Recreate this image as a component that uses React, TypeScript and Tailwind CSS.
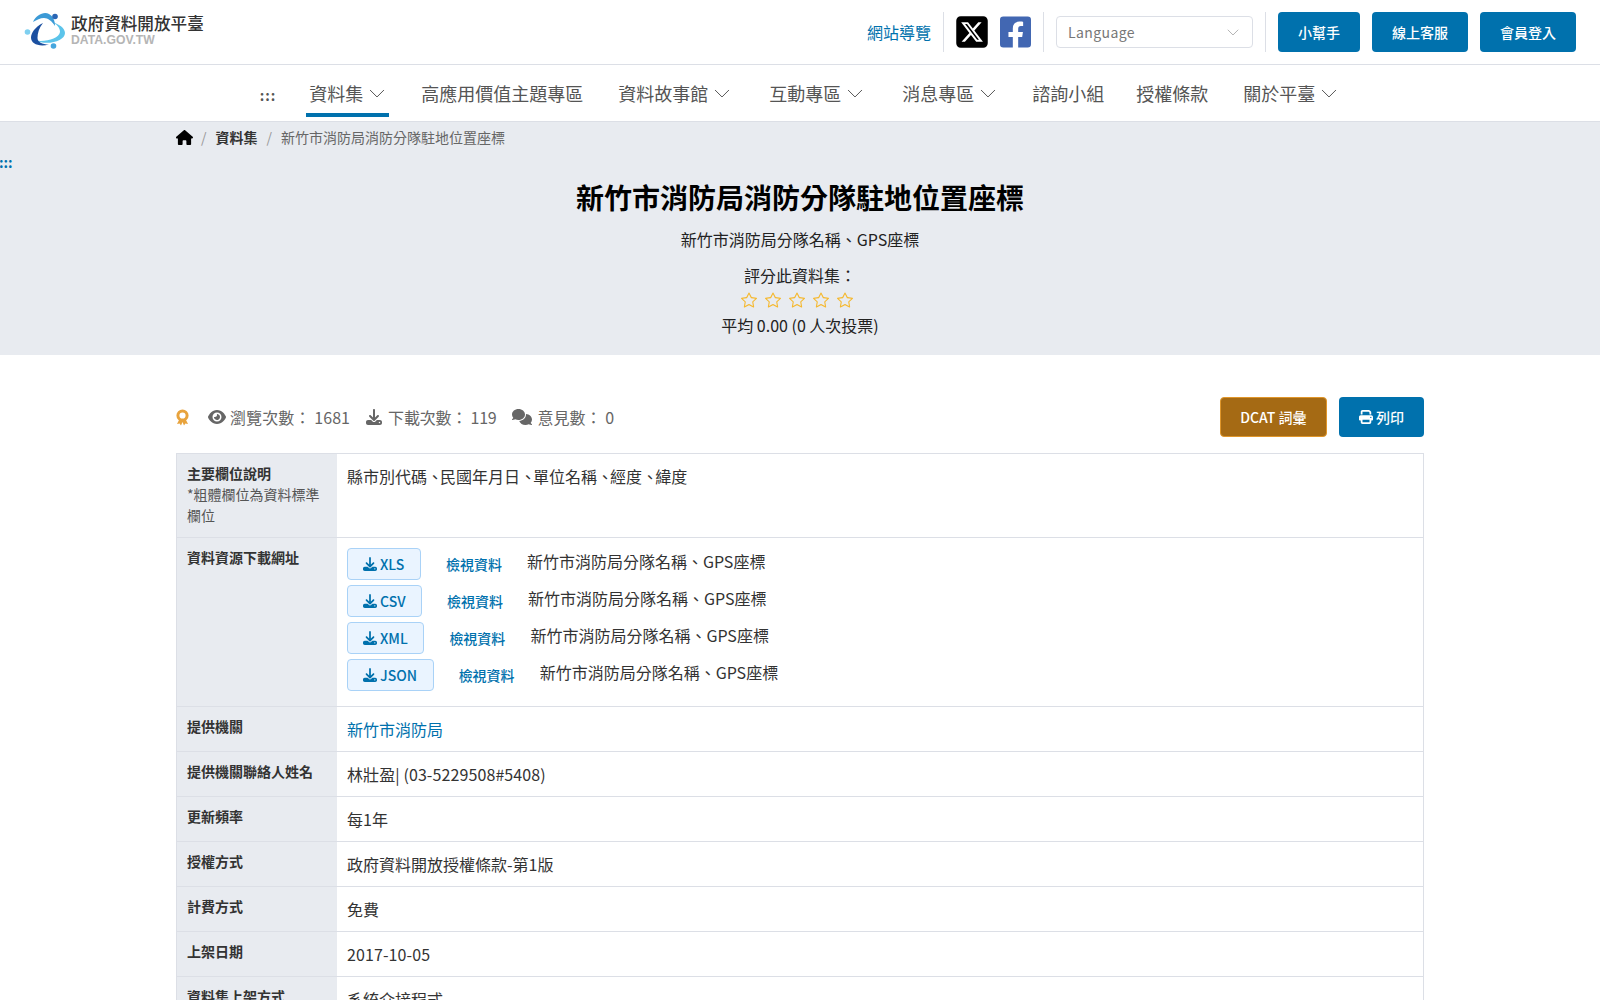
import React from "react";
import { FaFacebookSquare } from "react-icons/fa";
import { FaHouse, FaEye, FaDownload, FaComments, FaPrint, FaSquareXTwitter } from "react-icons/fa6";
import { BsStar } from "react-icons/bs";

function Logo() {
  return (
    <svg width="42" height="40" viewBox="0 0 42 40" className="shrink-0">
      <path d="M11 28.5 C22 30 35 27 36 20 C36 16 33 12 27 9.5 C35 12 41 16 41 21 C41 29 24 34 11 28.5Z" fill="#5cc4ea" />
      <path d="M9 10 C12 3 20 -1 25 2 C29 4 31 9 31 14 C28 9 24 6 20 6 C16 6 13 8 9 10Z" fill="#3c9ad6" />
      <path d="M19 11 C11 15 7 21 7 25.5 C7 32 15 35 25 32.5 C18 32.5 13.5 30 13.5 26 C13.5 21 15 16 19 11Z" fill="#1b4fa0" />
      <circle cx="31" cy="4.5" r="2.8" fill="#2a66b5" />
      <circle cx="3.5" cy="20" r="2.8" fill="#7fd0f0" />
      <circle cx="29.5" cy="34" r="2.8" fill="#45a6de" />
    </svg>
  );
}

function Award() {
  return (
    <svg width="13" height="17" viewBox="0 0 13 17">
      <path d="M3 11 L1 15 L3.6 14.6 L5 16.5 L6.5 13 L8 16.5 L9.4 14.6 L12 15 L10 11Z" fill="#e8a33d" />
      <circle cx="6.5" cy="6.5" r="4.6" fill="none" stroke="#e8a33d" strokeWidth="3" />
    </svg>
  );
}

function Chevron({ width, className }: { width: number; className?: string }) {
  return (
    <svg width={width} height={width * 0.56} viewBox="0 0 16 9" fill="none" stroke="currentColor" strokeWidth="1" className={className}>
      <path d="M1 1 L8 8 L15 1" />
    </svg>
  );
}

function NavItem({ label, chevron, active }: { label: string; chevron?: boolean; active?: boolean }) {
  return (
    <div className={`${active ? "border-[#0071ad]" : "border-transparent"} ${chevron ? "mx-[3px]" : ""} flex h-[52px] items-center border-b-4 px-[3px] pt-[8px]`}>
      <span className="text-[18px] text-[#555]">{label}</span>
      {chevron && <Chevron width={16} className="ml-[6px] mr-px text-[#555]" />}
    </div>
  );
}

function Row({ label, children, note }: { label: string; children: React.ReactNode; note?: string }) {
  return (
    <div className="flex border-b border-[#dcdfe6]">
      <div className="w-[160px] shrink-0 bg-[#e8ebf0] px-[10px] pt-[9px] text-[14px] leading-[21px] text-[#333]">
        <div className="font-bold">{label}</div>
        {note && <div className="pb-[11px] text-[#555]">{note}</div>}
      </div>
      <div className="min-h-[44px] flex-1 px-[10px] pt-[10px] text-[16px] leading-[24px] text-[#333]">{children}</div>
    </div>
  );
}

function Resource({ type }: { type: string }) {
  return (
    <div className="mb-[5px] flex items-start">
      <div className="flex h-[32px] items-center gap-[3px] rounded border border-[#a9d2f7] bg-[#eaf4ff] pl-[15px] pr-[15.6px] text-[14px] font-medium text-[#0071ad]">
        <FaDownload size={14} />
        <span>{type}</span>
      </div>
      <span className="ml-[25px] mt-[4px] text-[14px] font-medium leading-[24px] text-[#0071ad]">檢視資料</span>
      <span className="ml-[25px] mt-px leading-[24px]">新竹市消防局分隊名稱、GPS座標</span>
    </div>
  );
}

function Comma() {
  return <span className="tracking-[-3px]">、</span>;
}

export default function App() {
  return (
    <div className="h-screen overflow-hidden bg-white text-[16px] text-[#333]" style={{ fontFamily: '"Noto Sans CJK TC", "Noto Sans", sans-serif' }}>
      <header className="flex h-[65px] items-center justify-between border-b border-[#dcdfe6] px-[24px]">
        <div className="flex items-center gap-[5px]">
          <Logo />
          <div className="pb-[5px]">
            <div className="text-[16.6px] font-medium leading-[20px] text-[#333]">政府資料開放平臺</div>
            <div className="mt-px text-[12.2px] font-bold leading-[13px] text-[#b5b5b5]" style={{ fontFamily: '"Liberation Sans", sans-serif' }}>DATA.GOV.TW</div>
          </div>
        </div>
        <div className="flex items-center">
          <span className="text-[16px] text-[#0071ad]">網站導覽</span>
          <div className="mx-[12px] h-[40px] w-px bg-[#dcdfe6]" />
          <FaSquareXTwitter className="h-[36px] w-[32px] text-black" />
          <FaFacebookSquare className="ml-[12px] h-[36px] w-[31px] text-[#4267b2]" />
          <div className="mx-[12px] h-[40px] w-px bg-[#dcdfe6]" />
          <div className="flex h-[32px] w-[197px] items-center justify-between rounded border border-[#dcdfe6] pl-[11px] pr-[13px] text-[14px] tracking-[0.4px] text-[#777]">
            <span>Language</span>
            <Chevron width={12} className="text-[#999]" />
          </div>
          <div className="mx-[12px] h-[40px] w-px bg-[#dcdfe6]" />
          <div className="flex gap-[12px] text-[14px] font-medium text-white">
            <div className="flex h-[40px] items-center rounded bg-[#0071ad] px-[20px]">小幫手</div>
            <div className="flex h-[40px] items-center rounded bg-[#0071ad] px-[20px]">線上客服</div>
            <div className="flex h-[40px] items-center rounded bg-[#0071ad] px-[20px]">會員登入</div>
          </div>
        </div>
      </header>

      <nav className="flex h-[57px] items-start justify-center gap-[26px] border-b border-[#dcdfe6] pl-[4px]">
        <div className="mr-px flex h-[52px] items-center pt-[8px] text-[14px] font-bold tracking-[1px] text-[#555]">:::</div>
        <NavItem label="資料集" chevron active />
        <NavItem label="高應用價值主題專區" />
        <NavItem label="資料故事館" chevron />
        <NavItem label="互動專區" chevron />
        <NavItem label="消息專區" chevron />
        <NavItem label="諮詢小組" />
        <NavItem label="授權條款" />
        <NavItem label="關於平臺" chevron />
      </nav>

      <section className="h-[233px] bg-[#e8ebf0]">
        <div className="mx-auto flex h-[28px] w-[1248px] items-center pt-[3px] text-[14px]">
          <FaHouse size={17} className="text-black" />
          <span className="ml-[8px] mr-[9px] text-[#999]">/</span>
          <span className="font-bold text-[#333]">資料集</span>
          <span className="mx-[9px] text-[#999]">/</span>
          <span className="text-[#666]">新竹市消防局消防分隊駐地位置座標</span>
        </div>
        <div className="-ml-px h-[24px] text-[14px] font-bold leading-[24px] text-[#0071ad]">:::</div>
        <h1 className="pt-[2px] text-center text-[28px] font-bold leading-[42px] text-black">新竹市消防局消防分隊駐地位置座標</h1>
        <div className="mt-[9px] text-center leading-[24px] text-[#222]">新竹市消防局分隊名稱、GPS座標</div>
        <div className="mt-[12px] text-center leading-[24px] text-[#222]">評分此資料集：</div>
        <div className="mt-px flex h-[24px] items-center justify-center gap-[8px] pr-[7px] text-[#f5b82e]">
          <BsStar size={16} />
          <BsStar size={16} />
          <BsStar size={16} />
          <BsStar size={16} />
          <BsStar size={16} />
        </div>
        <div className="text-center leading-[26px] text-[#222]">平均 0.00 (0 人次投票)</div>
      </section>

      <main className="mx-auto w-[1248px] pt-[42px]">
        <div className="flex h-[40px] items-center justify-between">
          <div className="flex items-center text-[16px] text-[#666]">
            <Award />
            <FaEye size={18} className="ml-[19px]" />
            <span className="ml-[4px] tracking-[0.1px]">瀏覽次數： 1681</span>
            <FaDownload size={16} className="ml-[16px]" />
            <span className="ml-[6px] tracking-[-0.2px]">下載次數： 119</span>
            <FaComments size={20} className="ml-[15px]" />
            <span className="ml-[6px]">意見數： 0</span>
          </div>
          <div className="flex gap-[12px] text-[14px] font-medium text-white">
            <div className="flex h-[40px] items-center rounded border border-[#e0962a] bg-[#a56a14] px-[19.5px]">DCAT 詞彙</div>
            <div className="flex h-[40px] items-center gap-[3px] rounded bg-[#0071ad] px-[20px]">
              <FaPrint size={14} />
              <span>列印</span>
            </div>
          </div>
        </div>
        <div className="mt-[16px] border-x border-t border-[#dcdfe6]">
          <Row label="主要欄位說明" note="*粗體欄位為資料標準欄位">
            縣市別代碼<Comma />民國年月日<Comma />單位名稱<Comma />經度<Comma />緯度
          </Row>
          <Row label="資料資源下載網址">
            <div className="pb-[10px]">
              <Resource type="XLS" />
              <Resource type="CSV" />
              <Resource type="XML" />
              <Resource type="JSON" />
            </div>
          </Row>
          <Row label="提供機關"><span className="text-[#0071ad]">新竹市消防局</span></Row>
          <Row label="提供機關聯絡人姓名"><span className="tracking-[0.1px]">林壯盈| (03-5229508#5408)</span></Row>
          <Row label="更新頻率">每1年</Row>
          <Row label="授權方式">政府資料開放授權條款-第1版</Row>
          <Row label="計費方式">免費</Row>
          <Row label="上架日期"><span className="tracking-[0.1px]">2017-10-05</span></Row>
          <Row label="資料集上架方式">系統介接程式</Row>
        </div>
      </main>
    </div>
  );
}
